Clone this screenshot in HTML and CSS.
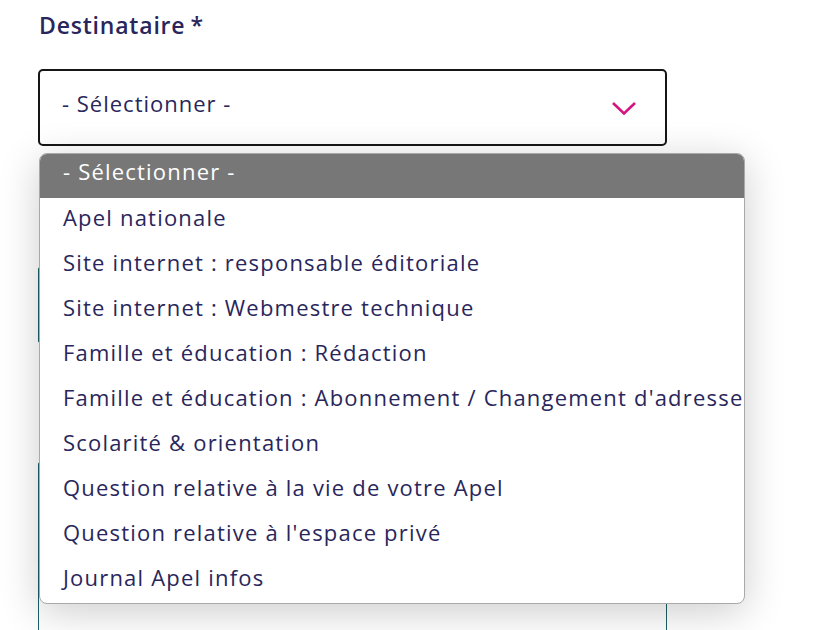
FILE: index.html
```html
<!DOCTYPE html>
<html lang="fr">
<head>
<meta charset="utf-8">
<title>Destinataire</title>
<link rel="stylesheet" href="styles.css">
</head>
<body>
<form class="form">
  <div class="field">
    <label class="label">Destinataire<span class="req">*</span></label>
    <div class="select-wrap">
      <div class="select">
        <span class="select-value">- Sélectionner -</span>
        <svg class="chevron" width="26" height="15" viewBox="0 0 26 15"><path d="M2 2 L13 12.5 L24 2" fill="none" stroke="#d4157f" stroke-width="2.6"/></svg>
      </div>
      <ul class="listbox">
        <li class="option selected">- Sélectionner -</li>
        <li class="option">Apel nationale</li>
        <li class="option">Site internet : responsable éditoriale</li>
        <li class="option">Site internet : Webmestre technique</li>
        <li class="option">Famille et éducation : Rédaction</li>
        <li class="option">Famille et éducation : Abonnement / Changement d'adresse</li>
        <li class="option">Scolarité &amp; orientation</li>
        <li class="option">Question relative à la vie de votre Apel</li>
        <li class="option">Question relative à l'espace privé</li>
        <li class="option">Journal Apel infos</li>
      </ul>
    </div>
  </div>
  <div class="input"></div>
  <div class="textarea"></div>
</form>
</body>
</html>
```
FILE: styles.css
```css
html, body {
  margin: 0;
  padding: 0;
  background: #ffffff;
}
body {
  font-family: "Open Sans", "Liberation Sans", sans-serif;
  color: #29265b;
  overflow: hidden;
  height: 630px;
}
.form {
  box-sizing: border-box;
  height: 630px;
  overflow: hidden;
  padding: 10px 0 0 38px;
  width: 829px;
  display: flex;
  flex-direction: column;
}
.field {
  width: 629px;
  display: flex;
  flex-direction: column;
}
.label {
  font-size: 23px;
  font-weight: 600;
  line-height: 30px;
  height: 30px;
  margin-bottom: 29px;
  padding-left: 1px;
  letter-spacing: 0.8px;
}
.req {
  margin-left: 5px;
}
.select-wrap {
  position: relative;
}
.select {
  box-sizing: border-box;
  height: 77px;
  border: 2px solid #161616;
  border-radius: 5px;
  display: flex;
  align-items: center;
  justify-content: space-between;
  padding: 0 28px 0 22px;
}
.select-value {
  font-size: 22px;
  letter-spacing: 1px;
  margin-top: -9px;
}
.chevron {
  display: block;
  margin-top: 1px;
}
.listbox {
  position: absolute;
  top: 84px;
  left: 1px;
  width: 706px;
  box-sizing: border-box;
  margin: 0;
  padding: 0;
  list-style: none;
  background: #ffffff;
  border: 1px solid #a9a9a9;
  border-radius: 8px;
  overflow: hidden;
  box-shadow: 0 8px 40px rgba(0, 0, 0, 0.2);
  z-index: 2;
}
.option {
  height: 45px;
  line-height: 39px;
  padding-left: 23px;
  font-size: 22px;
  letter-spacing: 1.2px;
  white-space: nowrap;
}
.option.selected {
  background: #777777;
  color: #ffffff;
  height: 44px;
  line-height: 35px;
}
.input {
  width: 629px;
  margin-top: 121px;
  height: 76px;
  flex: none;
  box-sizing: border-box;
  border: 1px solid #1b5f68;
  border-radius: 2px;
}
.textarea {
  width: 629px;
  margin-top: 119px;
  height: 200px;
  flex: none;
  box-sizing: border-box;
  border: 1px solid #1b5f68;
  border-radius: 2px;
}
```
